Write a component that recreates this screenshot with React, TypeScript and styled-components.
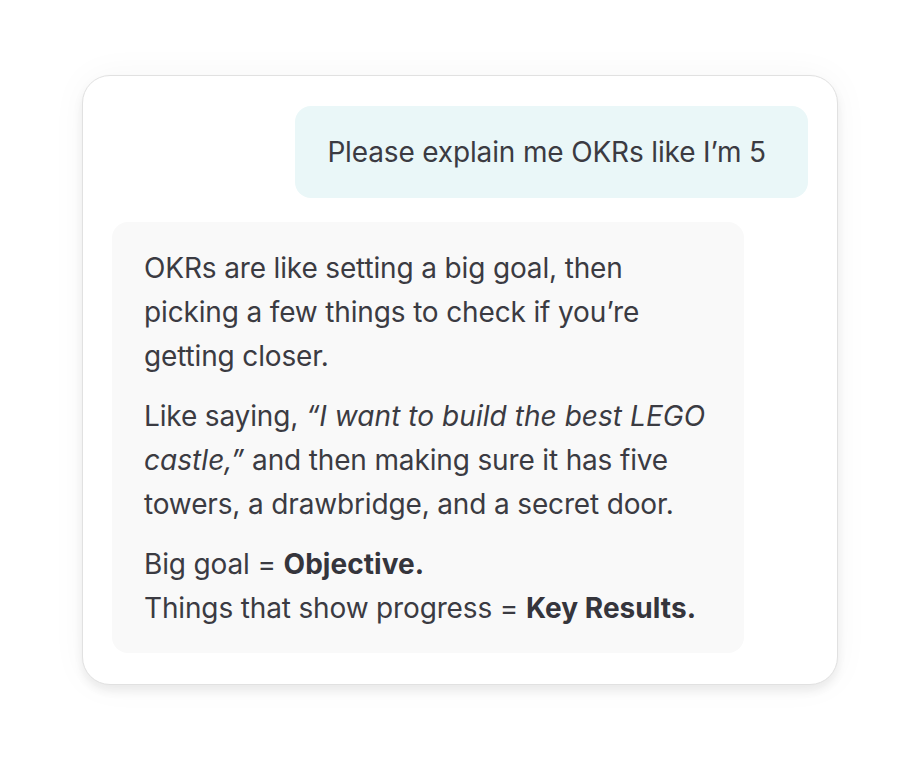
import React from "react";
import styled, { createGlobalStyle } from "styled-components";

const Global = createGlobalStyle`
  html, body { margin: 0; padding: 0; background: #ffffff; }
  body { font-family: Inter, "Noto Sans", sans-serif; }
`;

const Page = styled.div`
  min-height: 760px;
  display: flex;
  align-items: center;
  justify-content: center;
`;

const Card = styled.div`
  width: 756px;
  box-sizing: border-box;
  background: #ffffff;
  border: 1.5px solid #e1e1e1;
  border-radius: 28px;
  padding: 30px 29px 31px;
  display: flex;
  flex-direction: column;
  gap: 24px;
  box-shadow: 0 6px 10px rgba(0, 0, 0, 0.07), 0 0 36px rgba(0, 0, 0, 0.04);
`;

const Bubble = styled.div<{ $role: "user" | "assistant" }>`
  box-sizing: border-box;
  border-radius: 16px;
  font-size: 28px;
  line-height: 44px;
  color: #3b3b42;
  letter-spacing: -0.15px;
  align-self: ${(p) => (p.$role === "user" ? "flex-end" : "flex-start")};
  background: ${(p) => (p.$role === "user" ? "#eaf7f8" : "#f9f9f9")};
  padding: ${(p) => (p.$role === "user" ? "24px 42px 24px 32px" : "24px 32px 23px 32px")};
  width: ${(p) => (p.$role === "user" ? "auto" : "632px")};
`;

const Para = styled.p`
  margin: 0 0 16px;
  &:last-child { margin-bottom: 0; }
`;

const Strong = styled.strong`
  font-weight: 700;
  color: #35353c;
  letter-spacing: 0.05px;
`;

const Em = styled.em`
  font-style: italic;
  letter-spacing: 0.05px;
`;

export default function App() {
  return (
    <>
      <Global />
      <Page>
        <Card>
          <Bubble $role="user">Please explain me OKRs like I’m 5</Bubble>
          <Bubble $role="assistant">
            <Para>
              OKRs are like setting a big goal, then picking a few things to check if you’re getting closer.
            </Para>
            <Para>
              Like saying, <Em>“I want to build the best LEGO castle,”</Em> and then making sure it has five
              towers, a drawbridge, and a secret door.
            </Para>
            <Para>
              Big goal = <Strong>Objective.</Strong>
              <br />
              Things that show progress = <Strong>Key Results.</Strong>
            </Para>
          </Bubble>
        </Card>
      </Page>
    </>
  );
}
